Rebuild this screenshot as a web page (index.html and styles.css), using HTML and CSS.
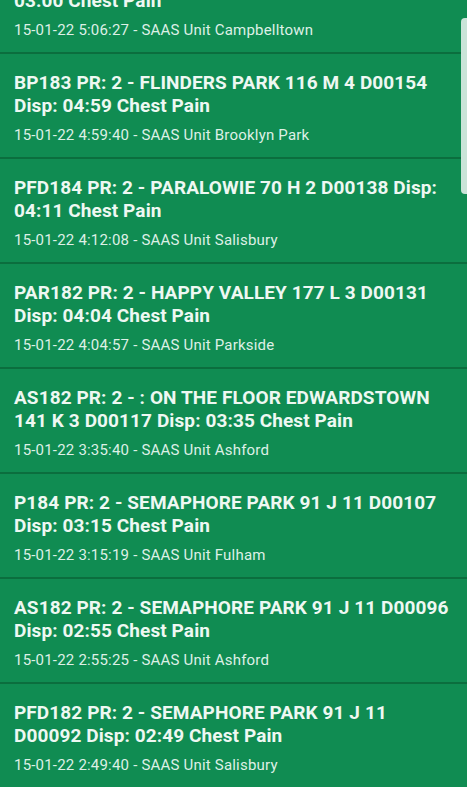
FILE: index.html
```html
<!DOCTYPE html>
<html lang="en">
<head>
<meta charset="utf-8">
<title>Incidents</title>
<link rel="stylesheet" href="styles.css">
</head>
<body>
<div class="screen">
  <ul class="list">
    <li class="item cut">
      <div class="title">03:00 Chest Pain</div>
      <div class="meta">15-01-22 5:06:27 - SAAS Unit Campbelltown</div>
    </li>
    <li class="item">
      <div class="title">BP183 PR: 2 - FLINDERS PARK 116 M 4 D00154 Disp: 04:59 Chest Pain</div>
      <div class="meta">15-01-22 4:59:40 - SAAS Unit Brooklyn Park</div>
    </li>
    <li class="item">
      <div class="title">PFD184 PR: 2 - PARALOWIE 70 H 2 D00138 Disp: 04:11 Chest Pain</div>
      <div class="meta">15-01-22 4:12:08 - SAAS Unit Salisbury</div>
    </li>
    <li class="item">
      <div class="title">PAR182 PR: 2 - HAPPY VALLEY 177 L 3 D00131 Disp: 04:04 Chest Pain</div>
      <div class="meta">15-01-22 4:04:57 - SAAS Unit Parkside</div>
    </li>
    <li class="item">
      <div class="title">AS182 PR: 2 - : ON THE FLOOR EDWARDSTOWN 141 K 3 D00117 Disp: 03:35 Chest Pain</div>
      <div class="meta">15-01-22 3:35:40 - SAAS Unit Ashford</div>
    </li>
    <li class="item">
      <div class="title">P184 PR: 2 - SEMAPHORE PARK 91 J 11 D00107 Disp: 03:15 Chest Pain</div>
      <div class="meta">15-01-22 3:15:19 - SAAS Unit Fulham</div>
    </li>
    <li class="item">
      <div class="title">AS182 PR: 2 - SEMAPHORE PARK 91 J 11 D00096 Disp: 02:55 Chest Pain</div>
      <div class="meta">15-01-22 2:55:25 - SAAS Unit Ashford</div>
    </li>
    <li class="item">
      <div class="title">PFD182 PR: 2 - SEMAPHORE PARK 91 J 11 D00092 Disp: 02:49 Chest Pain</div>
      <div class="meta">15-01-22 2:49:40 - SAAS Unit Salisbury</div>
    </li>
  </ul>
  <div class="scrollbar"></div>
</div>
</body>
</html>
```

FILE: styles.css
```css
html, body {
  margin: 0;
  padding: 0;
  height: 100%;
  overflow: hidden;
  background: #108c52;
}

.screen {
  position: relative;
  height: 787px;
  overflow: hidden;
  background: #108c52;
  font-family: Roboto, "Noto Sans", "Liberation Sans", sans-serif;
  color: #ecf7f0;
}

.list {
  list-style: none;
  margin: -28px 0 0 0;
  padding: 0;
}

.item {
  padding: 16.7px 10px 11.8px 14px;
  border-bottom: 2px solid #0b6e3e;
}

.title {
  font-size: 19px;
  line-height: 23px;
  font-weight: 700;
  letter-spacing: 0.1px;
  color: #eef8f2;
}

.meta {
  margin-top: 8.5px;
  font-size: 15px;
  line-height: 20px;
  font-weight: 400;
  letter-spacing: 0.2px;
  color: #def0e6;
}

.scrollbar {
  position: absolute;
  top: 18px;
  right: 0;
  width: 6px;
  height: 176px;
  border-radius: 4px 0 0 4px;
  background: #c9e4d8;
}
```
